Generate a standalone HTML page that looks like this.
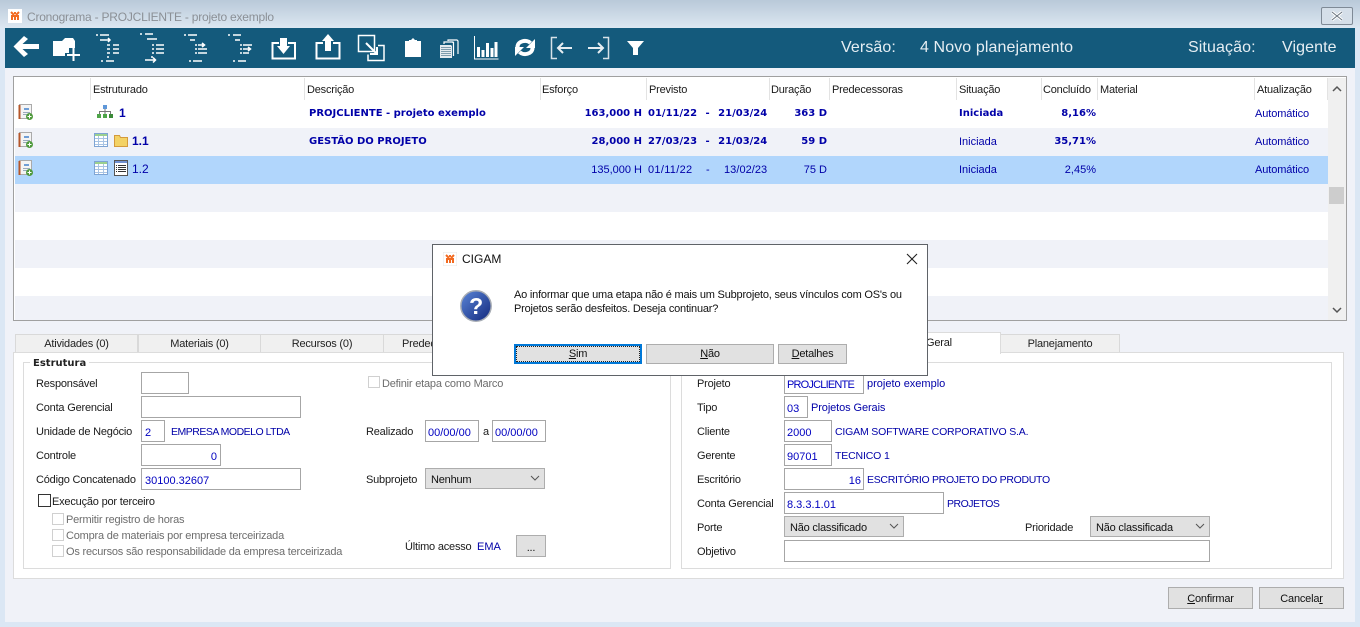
<!DOCTYPE html>
<html lang="pt"><head><meta charset="utf-8"><title>Cronograma</title>
<style>
html,body{margin:0;padding:0;width:1360px;height:627px;overflow:hidden;background:#dbe7f4}
body{position:relative;font:11px "Liberation Sans",sans-serif;color:#1a1a1a;letter-spacing:-.2px}
div,span,svg{position:absolute;box-sizing:border-box}
.t{white-space:nowrap;line-height:14px;height:14px;margin-top:1px}
.b{color:#0000a8;letter-spacing:0}
.s{font:bold 10px "DejaVu Sans",sans-serif;line-height:14px;color:#0000a8;letter-spacing:0}
.d{word-spacing:5px}
.n{font:bold 12px "Liberation Sans",sans-serif;line-height:14px;color:#0000a8;letter-spacing:0}
.cap{font-size:10.5px}
.r{text-align:right}.c{text-align:center}
.i{background:#fff;border:1px solid #a6a6a6;color:#0000c0;line-height:20px;padding:2px 0 0 3px;white-space:nowrap;letter-spacing:0}
.btn{background:#e1e1e1;border:1px solid #adadad;text-align:center;line-height:20px;color:#111}
.cmb{line-height:22px;text-align:left;padding-left:5px}
.tab{top:334px;height:19px;background:#f0f0f0;border:1px solid #d9d9d9;border-bottom:none;text-align:center;line-height:19px;color:#222}
.g{color:#6d6d6d}.cb{width:12px;height:12px;background:#fff;border:1px solid #d0d0d0}
.h{top:78px;height:22px;width:1px;background:#e3e3e3}
.big{top:38px;font-size:16px;height:20px;line-height:20px;color:#e6eef3;margin-top:0;letter-spacing:.1px}
</style></head><body>
<div style="left:0;top:0;width:1360px;height:28px;background:linear-gradient(#b9c9d9,#dce7f1)"></div>
<div style="left:5px;top:28px;width:1350px;height:594px;background:#f0f2f8"></div>
<svg style="left:8px;top:9px" width="14" height="14" viewBox="0 0 14 14"><rect width="14" height="14" fill="#fff"/><path d="M3 3l3 3M11 3L8 6M7 3v2M3 7h8M4 11V8M10 11V8M7 11V8" stroke="#f26a21" stroke-width="2"/></svg>
<div class="t" style="left:27px;top:9px;font-size:12px;color:#8b9096;letter-spacing:-.22px">Cronograma - PROJCLIENTE - projeto exemplo</div>
<div style="left:1321px;top:7px;width:32px;height:18px;border:1px solid #7f8a96;border-radius:2px;background:#d5dfe9"></div>
<svg style="left:1330px;top:11px" width="14" height="10" viewBox="0 0 14 10"><path d="M2 1l10 8M12 1L2 9" stroke="#fff" stroke-width="3"/><path d="M2 1l10 8M12 1L2 9" stroke="#69747f" stroke-width="1"/></svg>

<div style="left:5px;top:28px;width:1350px;height:40px;background:#145a7c"></div>
<svg style="left:0;top:28px" width="670" height="40" viewBox="0 0 670 40" fill="none" stroke="#fff">
<path d="M13.500 18.500L24 8L28 11L22.500 16H39V21H22.500L28 26L24 29Z" fill="#fff" stroke="none"/>
<path d="M53 13H62L65 10H73L75 13V20H69V25H65V28H53Z" fill="#fff" stroke="none"/><path d="M67 27H80M73.500 20V33" stroke-width="2"/>
<g stroke-width="1.500">
<path d="M96 7h2M100 7h9M100 12h5M105 12h5M108 10l2 2-2 2M113 17h6M113 21h6M113 25h6M107 17h3M107 21h3M107 25h3M101 33h2M106 33h8M108 28v2"/>
<path d="M140 6h2M145 6h8M147 11h10M152 17h2M152 21h2M152 25h2M156 17h8M156 21h8M156 25h8M145 32h10M153 29.500l2.500 2.500-2.500 2.500M152 28v2"/>
<path d="M184 7h2M188 7h9M190 12h5M198 17h6M202 15l2.500 2-2.500 2M198 21h9M198 25h9M195 17h2M195 21h2M195 25h2M189 33h2M193 33h9"/>
<path d="M228 7h2M233 7h8M235 12h5M243 17h9M243 21h7M248 19l2.500 2-2.500 2M243 25h6M240 17h2M240 21h2M240 25h2M233 33h2M238 33h8"/>
</g>
<path d="M279 15H272.500V30.500H295V15H288" stroke-width="2"/><path d="M280 10h7v8h3l-6.500 8-6.500-8h3z" fill="#fff" stroke="none"/>
<path d="M323 15H316.500V30.500H339.500V15H333" stroke-width="2"/><path d="M325 23v-10h-3l6-7 6 7h-3v10z" fill="#fff" stroke="none"/>
<path d="M358.500 7.500h16v16h-16zM378 17.500h6v15h-16v-6" stroke-width="1.500"/><path d="M366 15l11 11M370 26h7v-7" stroke-width="2"/>
<path d="M405 13H409V12H411L413 10L415 12H417V13H421V29H405Z" fill="#fff" stroke="none"/>
<path d="M440 17h11l1 1v12h-12z" fill="#e4ebef" stroke="none"/><path d="M441 19.500h10M441 21.500h10M441 23.500h10M441 25.500h10M441 27.500h10" stroke="#7d9cad" stroke-width="1"/><path d="M444 16v-2h9v1M453.500 14v14M448 13v-1h9l1 1v13" stroke-width="1.200"/>
<path d="M474.500 8v23h24" stroke-width="1"/><path d="M478.500 19v10M483 22v7M487.500 15v14M492 20v9M496 14v15" stroke-width="3"/>
<path d="M517.500 19c0-6 9-8 13-4" stroke-width="4"/><path d="M535 11v9h-9z" fill="#fff" stroke="none"/>
<path d="M532.500 20c0 6-9 8-13 4" stroke-width="4"/><path d="M515 28v-9h9z" fill="#fff" stroke="none"/>
<path d="M557 9.500h-5.500v21h5.500" stroke="#d7e2e8" stroke-width="1.500"/><path d="M572 20h-14M563 15l-5 5 5 5" stroke-width="2" stroke="#e7eef2"/>
<path d="M603 9.500h5.500v21h-5.500" stroke="#d7e2e8" stroke-width="1.500"/><path d="M588 20h15M598 15l5 5-5 5" stroke-width="2" stroke="#e7eef2"/>
<path d="M627 13H644L638 20V27H633V20Z" fill="#fff" stroke="none"/>
</svg>
<div class="t big" style="left:841px">Versão:</div>
<div class="t big" style="left:920px">4 Novo planejamento</div>
<div class="t big" style="left:1188px">Situação:</div>
<div class="t big" style="left:1282px">Vigente</div>

<div style="left:13px;top:76px;width:1334px;height:245px;background:#fff;border:1px solid #a0a0a0"></div>
<div style="left:15px;top:128px;width:1313px;height:28px;background:#f0f2f8"></div>
<div style="left:15px;top:156px;width:1313px;height:28px;background:#b1d6fc"></div>
<div style="left:15px;top:184px;width:1313px;height:28px;background:#f0f2f8"></div>
<div style="left:15px;top:240px;width:1313px;height:28px;background:#f0f2f8"></div>
<div style="left:15px;top:296px;width:1313px;height:24px;background:#f0f2f8"></div>
<div style="left:1328px;top:78px;width:18px;height:242px;background:#f0f0f0"></div>
<div style="left:1329px;top:187px;width:15px;height:17px;background:#cdcdcd"></div>
<svg style="left:1332px;top:85px" width="10" height="8"><path d="M1 6l4-4 4 4" fill="none" stroke="#555" stroke-width="1.500"/></svg>
<svg style="left:1332px;top:306px" width="10" height="8"><path d="M1 2l4 4 4-4" fill="none" stroke="#555" stroke-width="1.500"/></svg>

<div class="h" style="left:90px"></div><div class="h" style="left:304px"></div><div class="h" style="left:540px"></div><div class="h" style="left:646px"></div><div class="h" style="left:769px"></div><div class="h" style="left:829px"></div><div class="h" style="left:956px"></div><div class="h" style="left:1041px"></div><div class="h" style="left:1097px"></div><div class="h" style="left:1254px"></div><div class="h" style="left:1327px"></div>
<div class="t" style="left:93px;top:82px">Estruturado</div>
<div class="t" style="left:307px;top:82px">Descrição</div>
<div class="t" style="left:542px;top:82px">Esforço</div>
<div class="t" style="left:649px;top:82px">Previsto</div>
<div class="t" style="left:771px;top:82px">Duração</div>
<div class="t" style="left:832px;top:82px">Predecessoras</div>
<div class="t" style="left:959px;top:82px">Situação</div>
<div class="t" style="left:1043px;top:82px">Concluído</div>
<div class="t" style="left:1100px;top:82px">Material</div>
<div class="t" style="left:1257px;top:82px">Atualização</div>

<svg style="left:18px;top:104px" width="16" height="17" viewBox="0 0 16 17"><rect x="1.500" y="0.500" width="12" height="14" fill="#f4f4f4" stroke="#aaa"/><path d="M1.500 1v14" stroke="#b5562a" stroke-width="2"/><path d="M6 4h5v2H6z" fill="#6f9ed6"/><path d="M5 8.500h7M5 10.500h4" stroke="#9ab"/><circle cx="11.500" cy="12.500" r="3.500" fill="#4f9a3c"/><path d="M9.500 12.500h4M11.500 10.500v4" stroke="#fff"/></svg>
<svg style="left:18px;top:132px" width="16" height="17" viewBox="0 0 16 17"><rect x="1.500" y="0.500" width="12" height="14" fill="#f4f4f4" stroke="#aaa"/><path d="M1.500 1v14" stroke="#b5562a" stroke-width="2"/><path d="M6 4h5v2H6z" fill="#6f9ed6"/><path d="M5 8.500h7M5 10.500h4" stroke="#9ab"/><circle cx="11.500" cy="12.500" r="3.500" fill="#4f9a3c"/><path d="M9.500 12.500h4M11.500 10.500v4" stroke="#fff"/></svg>
<svg style="left:18px;top:160px" width="16" height="17" viewBox="0 0 16 17"><rect x="1.500" y="0.500" width="12" height="14" fill="#f4f4f4" stroke="#aaa"/><path d="M1.500 1v14" stroke="#b5562a" stroke-width="2"/><path d="M6 4h5v2H6z" fill="#6f9ed6"/><path d="M5 8.500h7M5 10.500h4" stroke="#9ab"/><circle cx="11.500" cy="12.500" r="3.500" fill="#4f9a3c"/><path d="M9.500 12.500h4M11.500 10.500v4" stroke="#fff"/></svg>
<svg style="left:97px;top:105px" width="16" height="14" viewBox="0 0 16 14"><rect x="6" y="0" width="4" height="4" fill="#5f97d8"/><path d="M8 4v3M2.500 9V6.500h11V9M8 7v2" stroke="#777" fill="none"/><rect x="0" y="9" width="4" height="4" fill="#4ea548"/><rect x="6" y="9" width="4" height="4" fill="#4ea548"/><rect x="12" y="9" width="4" height="4" fill="#3b8a38"/></svg>
<svg style="left:94px;top:133px" width="14" height="14" viewBox="0 0 14 14"><rect x=".5" y=".5" width="13" height="13" fill="#fff" stroke="#7ea4d4"/><path d="M1 1h12v2H1z" fill="#9bd08f"/><path d="M1 5.500h12M1 8.500h12M1 11.500h12M4.500 3v10M9.500 3v10" stroke="#a9c4e4"/></svg>
<svg style="left:114px;top:134px" width="14" height="13" viewBox="0 0 14 13"><path d="M.5 1.500h5l1 2h7v9H.500z" fill="#f3d265" stroke="#d49a3c"/></svg>
<svg style="left:94px;top:161px" width="14" height="14" viewBox="0 0 14 14"><rect x=".5" y=".5" width="13" height="13" fill="#fff" stroke="#7ea4d4"/><path d="M1 1h12v2H1z" fill="#9bd08f"/><path d="M1 5.500h12M1 8.500h12M1 11.500h12M4.500 3v10M9.500 3v10" stroke="#a9c4e4"/></svg>
<svg style="left:114px;top:160px" width="14" height="16" viewBox="0 0 14 16"><rect x=".5" y=".5" width="13" height="15" fill="#fff" stroke="#555"/><path d="M1 1h12v2H1z" fill="#6f8fd0"/><path d="M2 5.500h1M4 5.500h8M2 7.500h1M4 7.500h8M2 9.500h1M4 9.500h8M2 11.500h1M4 11.500h8" stroke="#333"/></svg>

<div class="t n" style="left:119px;top:105px">1</div>
<div class="t n" style="left:132px;top:133px">1.1</div>
<div class="t b" style="left:132px;top:161px;font-size:12px">1.2</div>
<div class="t s" style="left:309px;top:106px">PROJCLIENTE - projeto exemplo</div>
<div class="t s" style="left:309px;top:134px">GESTÃO DO PROJETO</div>
<div class="t s r" style="left:560px;top:106px;width:82px">163,000 H</div>
<div class="t s r" style="left:560px;top:134px;width:82px">28,000 H</div>
<div class="t b r" style="left:560px;top:162px;width:82px">135,000 H</div>
<div class="t s d" style="left:648px;top:106px">01/11/22 - 21/03/24</div>
<div class="t s d" style="left:648px;top:134px">27/03/23 - 21/03/24</div>
<div class="t b" style="left:648px;top:162px;letter-spacing:.3px">01/11/22</div><div class="t b" style="left:706px;top:162px">-</div><div class="t b" style="left:724px;top:162px;letter-spacing:.05px">13/02/23</div>
<div class="t s r" style="left:770px;top:106px;width:57px">363 D</div>
<div class="t s r" style="left:770px;top:134px;width:57px">59 D</div>
<div class="t b r" style="left:770px;top:162px;width:57px">75 D</div>
<div class="t s" style="left:959px;top:106px">Iniciada</div>
<div class="t b" style="left:959px;top:134px">Iniciada</div>
<div class="t b" style="left:959px;top:162px">Iniciada</div>
<div class="t s r" style="left:1040px;top:106px;width:56px">8,16%</div>
<div class="t s r" style="left:1040px;top:134px;width:56px">35,71%</div>
<div class="t b r" style="left:1040px;top:162px;width:56px">2,45%</div>
<div class="t b" style="left:1255px;top:106px;letter-spacing:-.1px">Automático</div>
<div class="t b" style="left:1255px;top:134px;letter-spacing:-.1px">Automático</div>
<div class="t b" style="left:1255px;top:162px;letter-spacing:-.1px">Automático</div>

<div class="tab" style="left:15px;width:123px">Atividades (0)</div>
<div class="tab" style="left:138px;width:123px">Materiais (0)</div>
<div class="tab" style="left:260px;width:124px">Recursos (0)</div>
<div class="tab" style="left:383px;width:130px;text-align:left;padding-left:18px">Predecessoras</div>
<div class="tab" style="left:1000px;width:120px">Planejamento</div>
<div style="left:13px;top:352px;width:1331px;height:227px;background:#fff;border:1px solid #dcdcdc"></div>
<div style="left:900px;top:332px;width:101px;height:22px;background:#fff;border:1px solid #dcdcdc;border-bottom:none"></div>
<div class="t" style="left:926px;top:335px">Geral</div>

<div style="left:23px;top:362px;width:648px;height:207px;border:1px solid #dcdcdc"></div>
<div class="t s" style="left:30px;top:356px;padding:0 3px;background:#fff;color:#222">Estrutura</div>
<div style="left:681px;top:362px;width:651px;height:207px;border:1px solid #dcdcdc"></div>

<div class="t" style="left:36px;top:376px">Responsável</div><div class="i" style="left:141px;top:372px;width:48px;height:22px"></div>
<div class="t" style="left:36px;top:400px">Conta Gerencial</div><div class="i" style="left:141px;top:396px;width:160px;height:22px"></div>
<div class="t" style="left:36px;top:424px">Unidade de Negócio</div><div class="i" style="left:141px;top:420px;width:24px;height:22px">2</div><div class="t b cap" style="left:171px;top:424px;letter-spacing:-.5px">EMPRESA MODELO LTDA</div>
<div class="t" style="left:36px;top:448px">Controle</div><div class="i r" style="left:141px;top:444px;width:80px;height:22px;padding-right:3px">0</div>
<div class="t" style="left:36px;top:472px">Código Concatenado</div><div class="i" style="left:141px;top:468px;width:160px;height:22px">30100.32607</div>
<div style="left:38px;top:494px;width:13px;height:13px;background:#fff;border:1px solid #333"></div><div class="t" style="left:52px;top:494px">Execução por terceiro</div>
<div class="cb" style="left:52px;top:513px"></div><div class="t g" style="left:66px;top:512px">Permitir registro de horas</div>
<div class="cb" style="left:52px;top:529px"></div><div class="t g" style="left:66px;top:528px">Compra de materiais por empresa terceirizada</div>
<div class="cb" style="left:52px;top:545px"></div><div class="t g" style="left:66px;top:544px">Os recursos são responsabilidade da empresa terceirizada</div>

<div class="cb" style="left:368px;top:376px"></div><div class="t g" style="left:382px;top:376px">Definir etapa como Marco</div>
<div class="t" style="left:366px;top:424px">Realizado</div>
<div class="i" style="left:425px;top:420px;width:54px;height:22px;padding-left:2px">00/00/00</div><div class="t" style="left:483px;top:424px">a</div><div class="i" style="left:492px;top:420px;width:54px;height:22px;padding-left:2px">00/00/00</div>
<div class="t" style="left:366px;top:472px">Subprojeto</div>
<div class="btn cmb" style="left:425px;top:468px;width:120px;height:21px">Nenhum</div>
<svg style="left:530px;top:475px" width="10" height="7"><path d="M1 1l4 4 4-4" fill="none" stroke="#555"/></svg>
<div class="t" style="left:405px;top:539px">Último acesso</div><div class="t b" style="left:477px;top:539px">EMA</div>
<div class="btn" style="left:516px;top:535px;width:30px;height:22px;line-height:24px">...</div>

<div class="t" style="left:697px;top:376px">Projeto</div><div class="i" style="left:784px;top:372px;width:80px;height:22px;padding-left:2px;letter-spacing:-.8px">PROJCLIENTE</div><div class="t b" style="left:867px;top:376px">projeto exemplo</div>
<div class="t" style="left:697px;top:400px">Tipo</div><div class="i" style="left:784px;top:396px;width:24px;height:22px;padding-left:2px">03</div><div class="t b" style="left:811px;top:400px;letter-spacing:-.1px">Projetos Gerais</div>
<div class="t" style="left:697px;top:424px">Cliente</div><div class="i" style="left:784px;top:420px;width:48px;height:22px;padding-left:2px">2000</div><div class="t b cap" style="left:835px;top:424px;letter-spacing:-.18px">CIGAM SOFTWARE CORPORATIVO S.A.</div>
<div class="t" style="left:697px;top:448px">Gerente</div><div class="i" style="left:784px;top:444px;width:48px;height:22px;padding-left:2px">90701</div><div class="t b cap" style="left:835px;top:448px;letter-spacing:-.15px">TECNICO 1</div>
<div class="t" style="left:697px;top:472px">Escritório</div><div class="i r" style="left:784px;top:468px;width:80px;height:22px;padding-right:2px">16</div><div class="t b cap" style="left:867px;top:472px;letter-spacing:-.3px">ESCRITÓRIO PROJETO DO PRODUTO</div>
<div class="t" style="left:697px;top:496px">Conta Gerencial</div><div class="i" style="left:784px;top:492px;width:160px;height:22px;padding-left:2px">8.3.3.1.01</div><div class="t b cap" style="left:947px;top:496px;letter-spacing:-.5px">PROJETOS</div>
<div class="t" style="left:697px;top:520px">Porte</div>
<div class="btn cmb" style="left:784px;top:516px;width:120px;height:21px">Não classificado</div>
<svg style="left:889px;top:523px" width="10" height="7"><path d="M1 1l4 4 4-4" fill="none" stroke="#555"/></svg>
<div class="t" style="left:1025px;top:520px">Prioridade</div>
<div class="btn cmb" style="left:1090px;top:516px;width:120px;height:21px">Não classificada</div>
<svg style="left:1195px;top:523px" width="10" height="7"><path d="M1 1l4 4 4-4" fill="none" stroke="#555"/></svg>
<div class="t" style="left:697px;top:544px">Objetivo</div><div class="i" style="left:784px;top:540px;width:426px;height:22px"></div>

<div class="btn" style="left:1168px;top:587px;width:85px;height:22px;line-height:22px"><u>C</u>onfirmar</div>
<div class="btn" style="left:1259px;top:587px;width:85px;height:22px;line-height:22px">Cancela<u>r</u></div>

<div style="left:432px;top:244px;width:496px;height:132px;background:#fff;border:1px solid #5f6368"></div>
<svg style="left:443px;top:252px" width="14" height="14" viewBox="0 0 14 14"><rect width="14" height="14" fill="#fff" stroke="#e5e5e5"/><path d="M3 3l3 3M11 3L8 6M7 3v2M3 7h8M4 11V8M10 11V8M7 11V8" stroke="#f26a21" stroke-width="2"/></svg>
<div class="t" style="left:462px;top:251px;font-size:12px;color:#111;letter-spacing:0">CIGAM</div>
<svg style="left:906px;top:253px" width="12" height="12"><path d="M1 1l10 10M11 1L1 11" stroke="#222" stroke-width="1.100"/></svg>
<svg style="left:460px;top:290px" width="32" height="32" viewBox="0 0 32 32"><defs><linearGradient id="q" x1="0" y1="0" x2="1" y2="1"><stop offset="0" stop-color="#5b86d8"/><stop offset="1" stop-color="#12287c"/></linearGradient></defs><circle cx="16" cy="16" r="15.200" fill="url(#q)" stroke="#a8adb5" stroke-width="1.500"/><text x="16" y="24" text-anchor="middle" font-family="Liberation Sans" font-weight="bold" font-size="23" fill="#fff">?</text></svg>
<div class="t" style="left:514px;top:287px;color:#111">Ao informar que uma etapa não é mais um Subprojeto, seus vínculos com OS's ou</div>
<div class="t" style="left:514px;top:301px;color:#111">Projetos serão desfeitos. Deseja continuar?</div>
<div class="btn" style="left:514px;top:344px;width:128px;height:20px;border:2px solid #0078d7;line-height:17px;outline:1px dotted #222;outline-offset:-3px"><u>S</u>im</div>
<div class="btn" style="left:646px;top:344px;width:128px;height:20px;line-height:19px"><u>N</u>ão</div>
<div class="btn" style="left:778px;top:344px;width:69px;height:20px;line-height:19px"><u>D</u>etalhes</div>
</body></html>
